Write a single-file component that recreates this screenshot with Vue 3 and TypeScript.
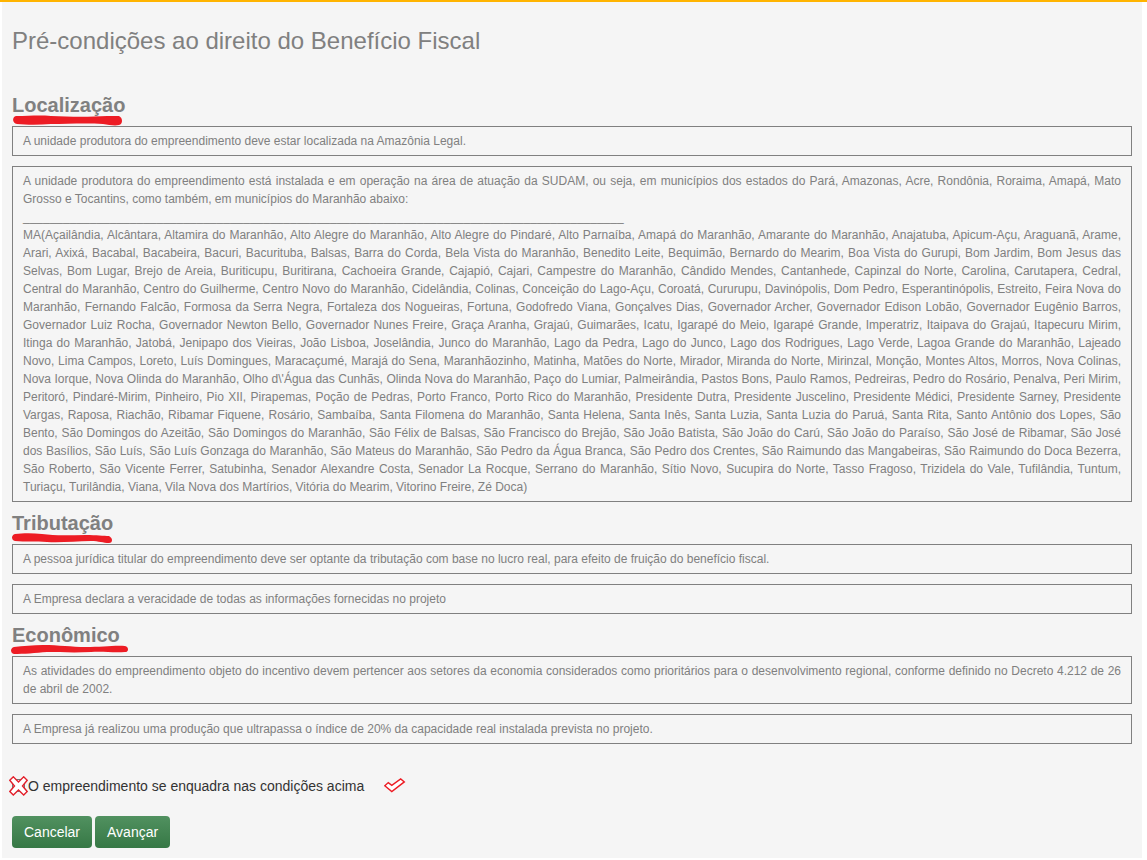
<script setup lang="ts">
import { ref } from 'vue'

interface Section {
  title: string
  strokeWidth: number
  stroke: string
  items: string[][]
}

const accepted = ref(false)

const municipalities =
  "MA(Açailândia, Alcântara, Altamira do Maranhão, Alto Alegre do Maranhão, Alto Alegre do Pindaré, Alto Parnaíba, Amapá do Maranhão, Amarante do Maranhão, Anajatuba, Apicum-Açu, Araguanã, Arame, " +
  "Arari, Axixá, Bacabal, Bacabeira, Bacuri, Bacurituba, Balsas, Barra do Corda, Bela Vista do Maranhão, Benedito Leite, Bequimão, Bernardo do Mearim, Boa Vista do Gurupi, Bom Jardim, Bom Jesus das " +
  "Selvas, Bom Lugar, Brejo de Areia, Buriticupu, Buritirana, Cachoeira Grande, Cajapió, Cajari, Campestre do Maranhão, Cândido Mendes, Cantanhede, Capinzal do Norte, Carolina, Carutapera, Cedral, " +
  "Central do Maranhão, Centro do Guilherme, Centro Novo do Maranhão, Cidelândia, Colinas, Conceição do Lago-Açu, Coroatá, Cururupu, Davinópolis, Dom Pedro, Esperantinópolis, Estreito, Feira Nova do " +
  "Maranhão, Fernando Falcão, Formosa da Serra Negra, Fortaleza dos Nogueiras, Fortuna, Godofredo Viana, Gonçalves Dias, Governador Archer, Governador Edison Lobão, Governador Eugênio Barros, " +
  "Governador Luiz Rocha, Governador Newton Bello, Governador Nunes Freire, Graça Aranha, Grajaú, Guimarães, Icatu, Igarapé do Meio, Igarapé Grande, Imperatriz, Itaipava do Grajaú, Itapecuru Mirim, " +
  "Itinga do Maranhão, Jatobá, Jenipapo dos Vieiras, João Lisboa, Joselândia, Junco do Maranhão, Lago da Pedra, Lago do Junco, Lago dos Rodrigues, Lago Verde, Lagoa Grande do Maranhão, Lajeado " +
  "Novo, Lima Campos, Loreto, Luís Domingues, Maracaçumé, Marajá do Sena, Maranhãozinho, Matinha, Matões do Norte, Mirador, Miranda do Norte, Mirinzal, Monção, Montes Altos, Morros, Nova Colinas, " +
  "Nova Iorque, Nova Olinda do Maranhão, Olho d\\'Água das Cunhãs, Olinda Nova do Maranhão, Paço do Lumiar, Palmeirândia, Pastos Bons, Paulo Ramos, Pedreiras, Pedro do Rosário, Penalva, Peri Mirim, " +
  "Peritoró, Pindaré-Mirim, Pinheiro, Pio XII, Pirapemas, Poção de Pedras, Porto Franco, Porto Rico do Maranhão, Presidente Dutra, Presidente Juscelino, Presidente Médici, Presidente Sarney, Presidente " +
  "Vargas, Raposa, Riachão, Ribamar Fiquene, Rosário, Sambaíba, Santa Filomena do Maranhão, Santa Helena, Santa Inês, Santa Luzia, Santa Luzia do Paruá, Santa Rita, Santo Antônio dos Lopes, São " +
  "Bento, São Domingos do Azeitão, São Domingos do Maranhão, São Félix de Balsas, São Francisco do Brejão, São João Batista, São João do Carú, São João do Paraíso, São José de Ribamar, São José " +
  "dos Basílios, São Luís, São Luís Gonzaga do Maranhão, São Mateus do Maranhão, São Pedro da Água Branca, São Pedro dos Crentes, São Raimundo das Mangabeiras, São Raimundo do Doca Bezerra, " +
  "São Roberto, São Vicente Ferrer, Satubinha, Senador Alexandre Costa, Senador La Rocque, Serrano do Maranhão, Sítio Novo, Sucupira do Norte, Tasso Fragoso, Trizidela do Vale, Tufilândia, Tuntum, " +
  "Turiaçu, Turilândia, Viana, Vila Nova dos Martírios, Vitória do Mearim, Vitorino Freire, Zé Doca)"

const sections: Section[] = [
  {
    title: 'Localização',
    strokeWidth: 114,
    stroke:
      'M5 1 C18 1 28 0 40 1 C60 2 80 2 96 1 C102 1 106 1 108 1 C112 3 112 9 108 10 C104 11 98 10 92 9 C75 8 55 9 40 9 C28 10 16 10 6 9 C1 8 1 2 5 1 Z',
    items: [
      ['A unidade produtora do empreendimento deve estar localizada na Amazônia Legal.'],
      [
        'A unidade produtora do empreendimento está instalada e em operação na área de atuação da SUDAM, ou seja, em municípios dos estados do Pará, Amazonas, Acre, Rondônia, Roraima, Amapá, Mato Grosso e Tocantins, como também, em municípios do Maranhão abaixo:',
        '_'.repeat(90),
        municipalities,
      ],
    ],
  },
  {
    title: 'Tributação',
    strokeWidth: 104,
    stroke:
      'M4 1 C12 0 22 0 31 1 C45 3 60 2 75 2 C85 2 93 3 98 3 C102 5 102 10 98 10 C92 10 88 8 80 8 C65 8 50 10 36 9 C25 8 14 9 4 8 C0 7 0 2 4 1 Z',
    items: [
      [
        'A pessoa jurídica titular do empreendimento deve ser optante da tributação com base no lucro real, para efeito de fruição do benefício fiscal.',
      ],
      ['A Empresa declara a veracidade de todas as informações fornecidas no projeto'],
    ],
  },
  {
    title: 'Econômico',
    strokeWidth: 120,
    stroke:
      'M3 2 C12 1 22 0 32 0 C48 0 60 2 75 2 C90 2 105 0 114 1 C118 2 118 7 114 7 C102 8 92 6 80 7 C62 8 48 7 36 7 C25 8 12 9 3 9 C-1 8 -1 3 3 2 Z',
    items: [
      [
        'As atividades do empreendimento objeto do incentivo devem pertencer aos setores da economia considerados como prioritários para o desenvolvimento regional, conforme definido no Decreto 4.212 de 26 de abril de 2002.',
      ],
      [
        'A Empresa já realizou uma produção que ultrapassa o índice de 20% da capacidade real instalada prevista no projeto.',
      ],
    ],
  },
]
</script>

<template>
  <main class="page">
    <form class="panel" @submit.prevent>
      <h1 class="title">Pré-condições ao direito do Benefício Fiscal</h1>

      <section v-for="section in sections" :key="section.title">
        <h2 class="heading">
          {{ section.title }}
          <svg class="marker" :width="section.strokeWidth" height="12" aria-hidden="true">
            <path :d="section.stroke" fill="#ed1c24" />
          </svg>
        </h2>
        <div class="items">
          <div v-for="(item, i) in section.items" :key="i" class="item">
            <p v-for="(line, j) in item" :key="j">{{ line }}</p>
          </div>
        </div>
      </section>

      <div class="confirm">
        <span class="check">
          <input id="accept" v-model="accepted" type="checkbox" />
          <svg class="cross" width="20" height="20" viewBox="0 0 20 20" aria-hidden="true">
            <path d="M3.500 3.500 H15.500 V15.500 H3.500 Z" stroke="#767676" fill="#fff" />
            <path
              d="M0.800 4.300 L4.300 0.800 L9.500 6 L14.700 0.800 L18.200 4.300 L13.500 10 L18.200 15.500 L14.700 19 L9.500 14 L4.300 19 L0.800 15.500 L5.500 10 Z"
              fill="#fff"
              stroke="#e3202b"
              stroke-width="1.400"
            />
          </svg>
        </span>
        <label for="accept">O empreendimento se enquadra nas condições acima</label>
        <svg class="tick" width="22" height="16" viewBox="0 0 22 16" aria-hidden="true">
          <path
            d="M0.800 7.800 L4.300 4.600 L7.800 7.400 L16.700 1 L20.300 3.900 L7.800 13.500 Z"
            fill="#fff"
            stroke="#ed1c24"
            stroke-width="1.400"
          />
        </svg>
      </div>

      <div class="actions">
        <button type="button">Cancelar</button>
        <button type="submit">Avançar</button>
      </div>
    </form>
  </main>
</template>

<style>
body {
  margin: 0;
  background: #fff;
}
</style>

<style scoped>
.page {
  border-top: 2px solid #ffb400;
  padding: 0 5px 2px 2px;
  font-family: 'Liberation Sans', Arial, sans-serif;
  color: #808080;
}

.panel {
  padding: 20px 10px 10px;
  background: #f5f5f5;
}

.title {
  margin: 0 0 24px;
  font-size: 24px;
  line-height: 38px;
  font-weight: 400;
}

.heading {
  position: relative;
  margin: 0;
  font-size: 20px;
  line-height: 42px;
  font-weight: 700;
}

.marker {
  position: absolute;
  left: -1px;
  bottom: -1px;
}

.items {
  display: flex;
  flex-direction: column;
  gap: 10px;
}

.item {
  padding: 5px 10px;
  border: 1px solid #808080;
  font-size: 12px;
  line-height: 18px;
  text-align: justify;
}

.item p {
  margin: 0;
}

.confirm {
  display: flex;
  align-items: center;
  margin-top: 32px;
  color: #333;
  font-size: 14px;
  line-height: 20px;
}

.check {
  position: relative;
  display: flex;
  align-self: flex-start;
  margin: 3px 3px 0 0;
}

.check input {
  width: 13px;
  height: 13px;
  margin: 0;
}

.cross {
  position: absolute;
  left: -3px;
  top: -3px;
  pointer-events: none;
}

.tick {
  margin-left: 20px;
}

.actions {
  display: flex;
  gap: 3px;
  margin-top: 20px;
}

.actions button {
  padding: 6px 12px;
  border: 0;
  border-radius: 4px;
  background: linear-gradient(#519160, #367845);
  color: #fff;
  font-family: inherit;
  font-size: 14px;
  line-height: 20px;
  cursor: pointer;
}
</style>
